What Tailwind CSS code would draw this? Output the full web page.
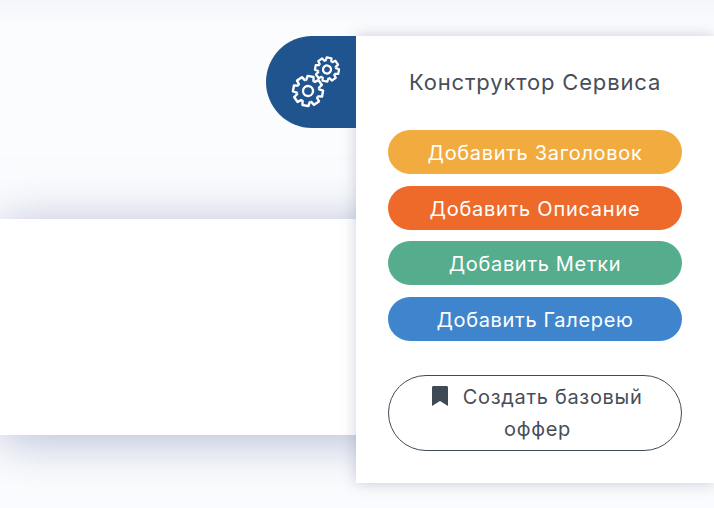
<!DOCTYPE html>
<html lang="en">
  <head>
    <meta charset="UTF-8" />
    <meta name="viewport" content="width=device-width, initial-scale=1.0" />
    <title>Конструктор Сервиса</title>
    <script src="https://cdn.jsdelivr.net/npm/@tailwindcss/browser@4"></script>
  </head>

  <body>
    <div class="relative h-[508px] w-[714px] overflow-hidden bg-[#fbfcfe] font-['Inter','Open_Sans',sans-serif]">
      <!-- top fade -->
      <div class="h-[28px] w-full bg-gradient-to-b from-[#f5f6fa] to-[#fbfcfe]"></div>

      <!-- page card -->
      <div class="h-[216px] mt-[191px] w-full bg-white shadow-[0_5px_46px_rgba(145,153,195,0.68)]"></div>

      <!-- constructor panel -->
      <div class="absolute left-[356px] top-[36px] w-[358px] h-[447px] bg-white px-8 shadow-[0_0_14px_rgba(60,70,100,0.25)]">
        <!-- tab -->
        <div class="absolute left-[-90px] top-0 w-[90px] h-[92px] rounded-l-[46px] bg-[#20548f] flex items-center justify-center">
          <svg width="90" height="92" viewBox="0 0 90 92" fill="none" stroke="white" stroke-width="2.4" stroke-linejoin="round">
            <defs>
              <g id="gear">
                <path id="tooth" d="M-4.300-10.400L-3.600-10.800L-3-14.800H3L3.600-10.800L4.300-10.400" />
                <use href="#tooth" transform="rotate(45)" />
                <use href="#tooth" transform="rotate(90)" />
                <use href="#tooth" transform="rotate(135)" />
                <use href="#tooth" transform="rotate(180)" />
                <use href="#tooth" transform="rotate(225)" />
                <use href="#tooth" transform="rotate(270)" />
                <use href="#tooth" transform="rotate(315)" />
              </g>
            </defs>
            <g transform="translate(42 55) rotate(10)">
              <use href="#gear" />
              <circle r="5" />
            </g>
            <g transform="translate(61 33.500) rotate(10) scale(0.8)" stroke-width="2.800">
              <use href="#gear" />
              <circle r="5" />
            </g>
          </svg>
        </div>

        <h2 class="mt-[33px] h-[27px] text-center text-[22px] leading-[27px] tracking-[0.84px] text-[#474e58] whitespace-nowrap">Конструктор Сервиса</h2>

        <div class="mt-[34px] flex flex-col gap-[11.67px]">
          <button class="h-[44px] pt-[2px] rounded-full bg-[#f2ab3e] text-white text-[20px] tracking-[0.68px]">Добавить Заголовок</button>
          <button class="h-[44px] pt-[2px] rounded-full bg-[#ee6a2b] text-white text-[20px] tracking-[0.75px]">Добавить Описание</button>
          <button class="h-[44px] pt-[2px] rounded-full bg-[#55ad8d] text-white text-[20px] tracking-[0.68px]">Добавить Метки</button>
          <button class="h-[44px] pt-[2px] rounded-full bg-[#3f85cd] text-white text-[20px] tracking-[0.68px]">Добавить Галерею</button>
        </div>

        <button class="mt-[34px] w-full h-[76px] rounded-[38px] border border-[#3f4a56] pl-[21px] pr-4 text-[20px] leading-[32px] tracking-[0.68px] text-[#474e58]">
          <svg class="inline-block mr-[8px] mb-[5px]" width="16" height="20" viewBox="0 0 16 20">
            <path d="M0 1.500C0 .7.7 0 1.500 0h13c.8 0 1.500.7 1.500 1.500V20L8 15 0 20Z" fill="#3f4a56" />
          </svg>
          Создать базовый оффер
        </button>
      </div>
    </div>
  </body>
</html>
